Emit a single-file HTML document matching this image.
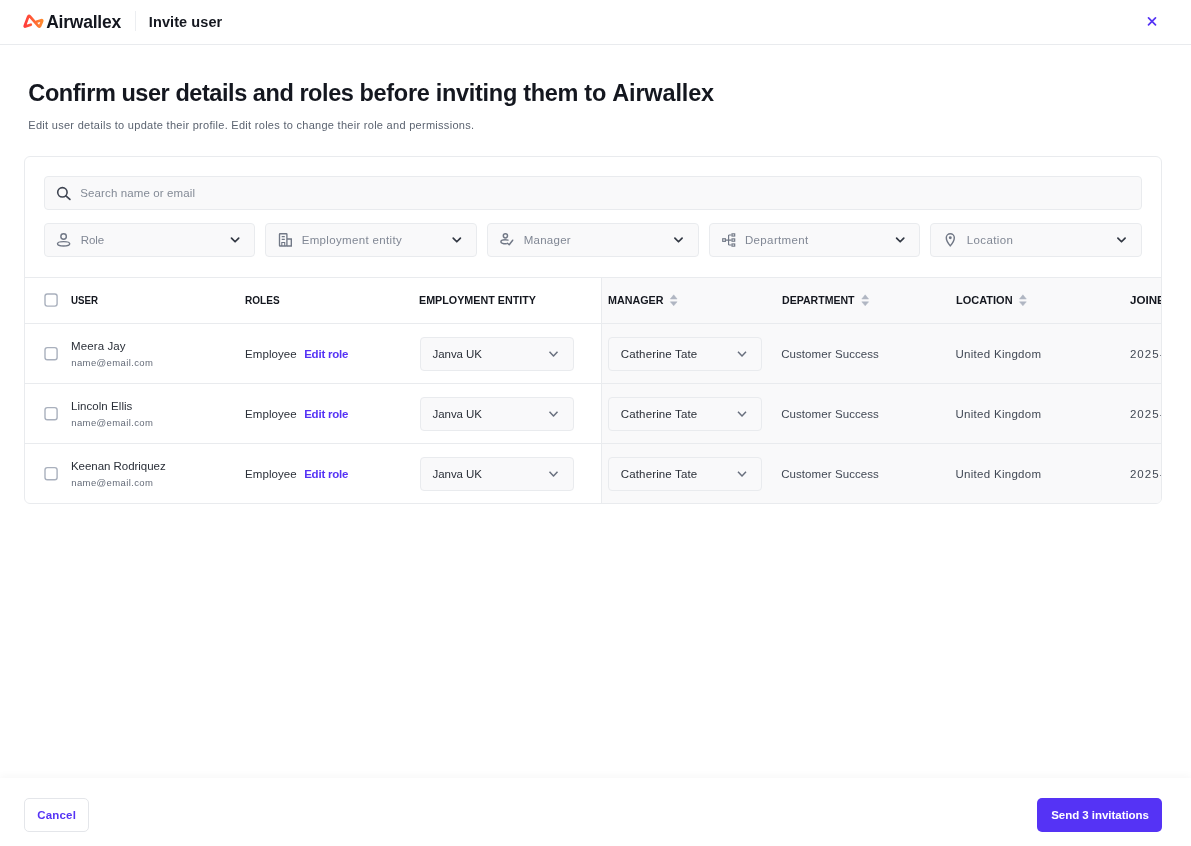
<!DOCTYPE html>
<html lang="en">
<head>
<meta charset="utf-8">
<title>Invite user</title>
<style>
*{box-sizing:border-box;margin:0;padding:0}
html,body{width:1191px;height:846px;overflow:hidden;background:#fff}
body{font-family:"Liberation Sans",sans-serif;color:#14171f;position:relative}
#root{position:absolute;left:0;top:0;width:1191px;height:846px;will-change:transform}
.abs{position:absolute}
.t{position:absolute;white-space:nowrap;margin:0}
.hdr{position:absolute;left:0;top:0;width:1191px;height:45px;border-bottom:1px solid #e9ebee}
.vsep{position:absolute;left:135px;top:11px;width:1px;height:20px;background:#eceef1}
.card{position:absolute;left:24px;top:156px;width:1138px;height:348px;border:1px solid #e9ebee;border-radius:6px;overflow:hidden;background:#fff}
.box{position:absolute;border:1px solid #e9ebee;border-radius:4px;background:#f9f9fa}
.line{position:absolute;background:#e9ebee}
.scrollbg{position:absolute;left:601px;top:278px;width:560px;height:225px;background:#f9f9fa;border-left:1px solid #e9ebee}
.cb{position:absolute;width:14px;height:14px;border:1.5px solid #adb4c0;border-radius:2.5px;background:#fff}
.clip{position:absolute;left:25px;top:157px;width:1136px;height:346px;overflow:hidden;border-radius:5px}
.inner{position:absolute;left:-25px;top:-157px;width:1191px;height:846px}
.foot{position:absolute;left:0;top:778px;width:1191px;height:68px;background:#fff;box-shadow:0 -2px 8px rgba(0,0,0,0.035)}
.btn{position:absolute;border-radius:5px}
svg{position:absolute;overflow:visible}
</style>
</head>
<body>
<div id="root">
<div class="hdr"></div>
<svg style="left:22px;top:13px" width="23" height="16" viewBox="0 0 23 16">
  <defs><linearGradient id="lg" x1="0" y1="0" x2="1" y2="0"><stop offset="0" stop-color="#ff3b3b"/><stop offset="1" stop-color="#ff8a2e"/></linearGradient></defs>
  <path d="M8.8 11.7 L3.4 13.5 Q2.4 13.8 2.8 12.8 L6.3 3.5 Q6.9 2.2 7.9 3.3 L16.4 13.1 Q17.5 14.2 18.1 12.9 L20.1 8.2 Q20.6 6.9 19.3 7.2 L14.5 8.8" fill="none" stroke="url(#lg)" stroke-width="2.7" stroke-linecap="round" stroke-linejoin="round"/>
</svg>
<div class="vsep"></div>
<svg style="left:1147px;top:16px" width="10" height="10" viewBox="0 0 10 10"><path d="M1.5 1.9 L8.5 8.9 M8.5 1.9 L1.5 8.9" stroke="#5533f5" stroke-width="1.7" stroke-linecap="round"/></svg>

<div class="card"></div>
<div class="clip"><div class="inner">
<!-- search -->
<div class="box" style="left:44px;top:176px;width:1098px;height:34px"></div>
<svg style="left:56px;top:186px" width="16" height="15" viewBox="0 0 16 15"><circle cx="6.4" cy="6.3" r="4.7" fill="none" stroke="#3f4552" stroke-width="1.6"/><path d="M9.9 9.8 L13.9 13.4" stroke="#3f4552" stroke-width="1.7" stroke-linecap="round"/></svg>
<!-- filters -->
<div class="box" style="left:44px;top:223px;width:211px;height:34px"></div>
<div class="box" style="left:265px;top:223px;width:212px;height:34px"></div>
<div class="box" style="left:487px;top:223px;width:212px;height:34px"></div>
<div class="box" style="left:709px;top:223px;width:211px;height:34px"></div>
<div class="box" style="left:930px;top:223px;width:212px;height:34px"></div>
<!-- table -->
<div class="scrollbg"></div>
<div class="line" style="left:25px;top:277px;width:1136px;height:1px"></div>
<div class="line" style="left:25px;top:323px;width:1136px;height:1px"></div>
<div class="line" style="left:25px;top:383px;width:1136px;height:1px"></div>
<div class="line" style="left:25px;top:443px;width:1136px;height:1px"></div>
<div class="box" style="left:420px;top:337px;width:154px;height:34px"></div>
<div class="box" style="left:608px;top:337px;width:154px;height:34px"></div>
<div class="box" style="left:420px;top:397px;width:154px;height:34px"></div>
<div class="box" style="left:608px;top:397px;width:154px;height:34px"></div>
<div class="box" style="left:420px;top:457px;width:154px;height:34px"></div>
<div class="box" style="left:608px;top:457px;width:154px;height:34px"></div>
<svg style="left:0;top:0" width="1191" height="846" viewBox="0 0 1191 846">
<path d="M231.50 238.05 L235.10 241.75 L238.70 238.05" fill="none" stroke="#323843" stroke-width="1.7" stroke-linecap="round" stroke-linejoin="round"/>
<path d="M453.20 238.05 L456.80 241.75 L460.40 238.05" fill="none" stroke="#323843" stroke-width="1.7" stroke-linecap="round" stroke-linejoin="round"/>
<path d="M674.90 238.05 L678.50 241.75 L682.10 238.05" fill="none" stroke="#323843" stroke-width="1.7" stroke-linecap="round" stroke-linejoin="round"/>
<path d="M896.60 238.05 L900.20 241.75 L903.80 238.05" fill="none" stroke="#323843" stroke-width="1.7" stroke-linecap="round" stroke-linejoin="round"/>
<path d="M1117.90 238.05 L1121.50 241.75 L1125.10 238.05" fill="none" stroke="#323843" stroke-width="1.7" stroke-linecap="round" stroke-linejoin="round"/>
<circle cx="63.6" cy="236.5" r="2.75" fill="none" stroke="#717886" stroke-width="1.45"/>
<ellipse cx="63.6" cy="243.8" rx="6.1" ry="2.2" fill="none" stroke="#717886" stroke-width="1.45"/>
<g fill="none" stroke="#717886" stroke-width="1.35"><rect x="279.5" y="233.7" width="7.4" height="12.3" rx="0.6"/><path d="M287 239 H291.3 V246 H287"/><path d="M281.7 236.6 H284.8 M281.7 239.4 H284.8" stroke-width="1.1"/><path d="M281.8 246 V242.5 H284.7 V246" stroke-width="1.1"/></g>
<g fill="none" stroke="#717886" stroke-width="1.45" stroke-linecap="round" stroke-linejoin="round"><circle cx="505.4" cy="235.8" r="2.1"/><path d="M508 240.1 C506.8 239.8 506 239.7 505.2 239.7 C502.4 239.7 500.9 240.6 500.9 241.7 C500.9 242.9 502.6 243.8 506.3 243.8"/><path d="M507.4 243.3 L509.2 244.8 L512.7 240.2"/></g>
<g fill="none" stroke="#717886" stroke-width="1.15"><rect x="722.7" y="238.75" width="2.7" height="2.6"/><path d="M725.9 240.05 H731.4 M728.6 234.9 V245.1 M728.6 235 H731.4 M728.6 245 H731.4"/><rect x="732" y="233.85" width="2.7" height="2.2"/><rect x="732" y="238.9" width="2.7" height="2.3"/><rect x="732" y="243.95" width="2.7" height="2.2"/></g>
<path d="M950.3 245.9 C947.2 242.3 946.3 240 946.3 237.8 a4 4 0 0 1 8 0 C954.3 240 953.4 242.3 950.3 245.9 Z" fill="none" stroke="#717886" stroke-width="1.45" stroke-linejoin="round"/><circle cx="950.3" cy="237.8" r="1.45" fill="#717886"/>
<path d="M673.7 294.8 L677.1 299 H670.3000000000001 Z M673.7 305.8 L677.1 301.8 H670.3000000000001 Z" fill="#b0b6c2" stroke="#b0b6c2" stroke-width="0.5" stroke-linejoin="round"/>
<path d="M865.2 294.8 L868.6 299 H861.8000000000001 Z M865.2 305.8 L868.6 301.8 H861.8000000000001 Z" fill="#b0b6c2" stroke="#b0b6c2" stroke-width="0.5" stroke-linejoin="round"/>
<path d="M1022.9 294.8 L1026.3 299 H1019.5 Z M1022.9 305.8 L1026.3 301.8 H1019.5 Z" fill="#b0b6c2" stroke="#b0b6c2" stroke-width="0.5" stroke-linejoin="round"/>
<rect x="45" y="294.05" width="12.1" height="12.1" rx="2.3" fill="#fff" stroke="#a9b0bd" stroke-width="1.4"/>
<rect x="45" y="347.65" width="12.1" height="12.1" rx="2.3" fill="#fff" stroke="#a9b0bd" stroke-width="1.4"/>
<rect x="45" y="407.65" width="12.1" height="12.1" rx="2.3" fill="#fff" stroke="#a9b0bd" stroke-width="1.4"/>
<rect x="45" y="467.65" width="12.1" height="12.1" rx="2.3" fill="#fff" stroke="#a9b0bd" stroke-width="1.4"/>
<path d="M549.50 351.70 L553.50 356.10 L557.50 351.70" fill="none" stroke="#69707e" stroke-width="1.45" stroke-linecap="butt" stroke-linejoin="round"/>
<path d="M738.00 351.70 L742.00 356.10 L746.00 351.70" fill="none" stroke="#69707e" stroke-width="1.45" stroke-linecap="butt" stroke-linejoin="round"/>
<path d="M549.50 411.70 L553.50 416.10 L557.50 411.70" fill="none" stroke="#69707e" stroke-width="1.45" stroke-linecap="butt" stroke-linejoin="round"/>
<path d="M738.00 411.70 L742.00 416.10 L746.00 411.70" fill="none" stroke="#69707e" stroke-width="1.45" stroke-linecap="butt" stroke-linejoin="round"/>
<path d="M549.50 471.70 L553.50 476.10 L557.50 471.70" fill="none" stroke="#69707e" stroke-width="1.45" stroke-linecap="butt" stroke-linejoin="round"/>
<path d="M738.00 471.70 L742.00 476.10 L746.00 471.70" fill="none" stroke="#69707e" stroke-width="1.45" stroke-linecap="butt" stroke-linejoin="round"/>
</svg>
<div class="t" style="left:80.3px;top:187px;font-size:11.5px;line-height:12px;font-weight:400;letter-spacing:0.113px;color:#838a96">Search name or email</div>
<div class="t" style="left:80.66px;top:234px;font-size:11.5px;line-height:12px;font-weight:400;letter-spacing:-0.019px;color:#808794">Role</div>
<div class="t" style="left:301.66px;top:234px;font-size:11.5px;line-height:12px;font-weight:400;letter-spacing:0.34px;color:#808794">Employment entity</div>
<div class="t" style="left:523.76px;top:234px;font-size:11.5px;line-height:12px;font-weight:400;letter-spacing:0.249px;color:#808794">Manager</div>
<div class="t" style="left:744.96px;top:234px;font-size:11.5px;line-height:12px;font-weight:400;letter-spacing:0.358px;color:#808794">Department</div>
<div class="t" style="left:966.66px;top:234px;font-size:11.5px;line-height:12px;font-weight:400;letter-spacing:0.395px;color:#808794">Location</div>
<div class="t" style="left:71.25px;top:294px;font-size:11px;line-height:12px;font-weight:700;letter-spacing:0px;color:#14171f;transform:scaleX(0.8843);transform-origin:0 0">USER</div>
<div class="t" style="left:245.27px;top:294px;font-size:11px;line-height:12px;font-weight:700;letter-spacing:0px;color:#14171f;transform:scaleX(0.9129);transform-origin:0 0">ROLES</div>
<div class="t" style="left:419.33px;top:294px;font-size:11px;line-height:12px;font-weight:700;letter-spacing:0px;color:#14171f;transform:scaleX(0.9761);transform-origin:0 0">EMPLOYMENT ENTITY</div>
<div class="t" style="left:607.63px;top:294px;font-size:11px;line-height:12px;font-weight:700;letter-spacing:0px;color:#14171f;transform:scaleX(0.9777);transform-origin:0 0">MANAGER</div>
<div class="t" style="left:781.94px;top:294px;font-size:11px;line-height:12px;font-weight:700;letter-spacing:0px;color:#14171f;transform:scaleX(0.96);transform-origin:0 0">DEPARTMENT</div>
<div class="t" style="left:956.01px;top:294px;font-size:11px;line-height:12px;font-weight:700;letter-spacing:0px;color:#14171f;transform:scaleX(0.9993);transform-origin:0 0">LOCATION</div>
<div class="t" style="left:1130.27px;top:294px;font-size:11px;line-height:12px;font-weight:700;letter-spacing:0px;color:#14171f;transform:scaleX(1.0535);transform-origin:0 0">JOINED DATE</div>
<div class="t" style="left:70.96px;top:340px;font-size:11.5px;line-height:12px;font-weight:400;letter-spacing:0.119px;color:#2a2f38">Meera Jay</div>
<div class="t" style="left:71.28px;top:357px;font-size:9.5px;line-height:11px;font-weight:400;letter-spacing:0.379px;color:#646b78">name@email.com</div>
<div class="t" style="left:245.06px;top:348px;font-size:11.5px;line-height:12px;font-weight:400;letter-spacing:0.065px;color:#2a2f38">Employee</div>
<div class="t" style="left:304.15px;top:348px;font-size:11.5px;line-height:12px;font-weight:700;letter-spacing:-0.215px;color:#5533f5">Edit role</div>
<div class="t" style="left:432.57px;top:348px;font-size:11.5px;line-height:12px;font-weight:400;letter-spacing:-0.061px;color:#2a2f38">Janva UK</div>
<div class="t" style="left:620.84px;top:348px;font-size:11.5px;line-height:12px;font-weight:400;letter-spacing:0.133px;color:#2a2f38">Catherine Tate</div>
<div class="t" style="left:781.14px;top:348px;font-size:11.5px;line-height:12px;font-weight:400;letter-spacing:0.082px;color:#414854">Customer Success</div>
<div class="t" style="left:955.42px;top:348px;font-size:11.5px;line-height:12px;font-weight:400;letter-spacing:0.296px;color:#414854">United Kingdom</div>
<div class="t" style="left:1129.94px;top:348px;font-size:11.5px;line-height:12px;font-weight:400;letter-spacing:1.029px;color:#414854">2025-04-12</div>
<div class="t" style="left:70.96px;top:400px;font-size:11.5px;line-height:12px;font-weight:400;letter-spacing:0.057px;color:#2a2f38">Lincoln Ellis</div>
<div class="t" style="left:71.28px;top:417px;font-size:9.5px;line-height:11px;font-weight:400;letter-spacing:0.379px;color:#646b78">name@email.com</div>
<div class="t" style="left:245.06px;top:408px;font-size:11.5px;line-height:12px;font-weight:400;letter-spacing:0.065px;color:#2a2f38">Employee</div>
<div class="t" style="left:304.15px;top:408px;font-size:11.5px;line-height:12px;font-weight:700;letter-spacing:-0.215px;color:#5533f5">Edit role</div>
<div class="t" style="left:432.57px;top:408px;font-size:11.5px;line-height:12px;font-weight:400;letter-spacing:-0.061px;color:#2a2f38">Janva UK</div>
<div class="t" style="left:620.84px;top:408px;font-size:11.5px;line-height:12px;font-weight:400;letter-spacing:0.133px;color:#2a2f38">Catherine Tate</div>
<div class="t" style="left:781.14px;top:408px;font-size:11.5px;line-height:12px;font-weight:400;letter-spacing:0.082px;color:#414854">Customer Success</div>
<div class="t" style="left:955.42px;top:408px;font-size:11.5px;line-height:12px;font-weight:400;letter-spacing:0.296px;color:#414854">United Kingdom</div>
<div class="t" style="left:1129.94px;top:408px;font-size:11.5px;line-height:12px;font-weight:400;letter-spacing:1.029px;color:#414854">2025-04-12</div>
<div class="t" style="left:70.96px;top:460px;font-size:11.5px;line-height:12px;font-weight:400;letter-spacing:-0.037px;color:#2a2f38">Keenan Rodriquez</div>
<div class="t" style="left:71.28px;top:477px;font-size:9.5px;line-height:11px;font-weight:400;letter-spacing:0.379px;color:#646b78">name@email.com</div>
<div class="t" style="left:245.06px;top:468px;font-size:11.5px;line-height:12px;font-weight:400;letter-spacing:0.065px;color:#2a2f38">Employee</div>
<div class="t" style="left:304.15px;top:468px;font-size:11.5px;line-height:12px;font-weight:700;letter-spacing:-0.215px;color:#5533f5">Edit role</div>
<div class="t" style="left:432.57px;top:468px;font-size:11.5px;line-height:12px;font-weight:400;letter-spacing:-0.061px;color:#2a2f38">Janva UK</div>
<div class="t" style="left:620.84px;top:468px;font-size:11.5px;line-height:12px;font-weight:400;letter-spacing:0.133px;color:#2a2f38">Catherine Tate</div>
<div class="t" style="left:781.14px;top:468px;font-size:11.5px;line-height:12px;font-weight:400;letter-spacing:0.082px;color:#414854">Customer Success</div>
<div class="t" style="left:955.42px;top:468px;font-size:11.5px;line-height:12px;font-weight:400;letter-spacing:0.296px;color:#414854">United Kingdom</div>
<div class="t" style="left:1129.94px;top:468px;font-size:11.5px;line-height:12px;font-weight:400;letter-spacing:1.029px;color:#414854">2025-04-12</div>
</div></div>
<div class="foot"></div>
<div class="btn" style="left:24px;top:798px;width:65px;height:34px;border:1px solid #e4e6ea;background:#fff"></div>
<div class="btn" style="left:1037px;top:798px;width:125px;height:34px;background:#5533f5"></div>
<div class="t" style="left:46.13px;top:12px;font-size:17.5px;line-height:20px;font-weight:700;letter-spacing:-0.223px;color:#14171f">Airwallex</div>
<div class="t" style="left:148.86px;top:14px;font-size:14.5px;line-height:16px;font-weight:700;letter-spacing:0.081px;color:#14171f">Invite user</div>
<h1 class="t" style="left:28.37px;top:80px;font-size:23.5px;line-height:26px;font-weight:700;letter-spacing:-0.339px;color:#14171f"><span style="letter-spacing:-0.44px">Confirm user details and roles </span><span style="letter-spacing:-0.296px">before inviting them to </span><span style="letter-spacing:-0.159px">Airwallex</span></h1>
<div class="t" style="left:28.32px;top:119px;font-size:11px;line-height:12px;font-weight:400;letter-spacing:0.285px;color:#5b6370">Edit user details to update their profile. Edit roles to change their role and permissions.</div>
<div class="t" style="left:37.36px;top:809px;font-size:11.5px;line-height:12px;font-weight:700;letter-spacing:0.157px;color:#5533f5">Cancel</div>
<div class="t" style="left:1051.19px;top:809px;font-size:11.5px;line-height:12px;font-weight:700;letter-spacing:-0.037px;color:#ffffff">Send 3 invitations</div>
</div>
</body>
</html>
